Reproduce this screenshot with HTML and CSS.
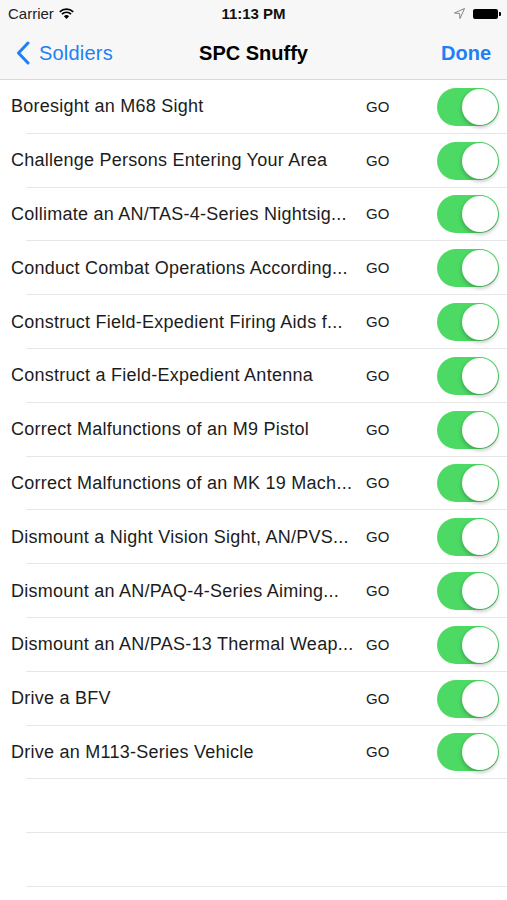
FILE: index.html
```html
<!DOCTYPE html>
<html lang="en">
<head>
    <meta charset="UTF-8">
    <meta name="viewport" content="width=device-width, initial-scale=1.0">
    <title>SPC Snuffy</title>
    <link rel="stylesheet" href="styles.css">
</head>
<body>
    <div class="top">
        <div class="status">
            <div class="carrier">
                Carrier
                <svg class="wifi" width="15" height="11" viewBox="0 0 15 11">
                    <path d="M7.5 11 L4.9 8.2 A3.8 3.8 0 0 1 10.1 8.2 Z" fill="#000"/>
                    <path d="M2.9 6.1 A6.6 6.6 0 0 1 12.1 6.1" stroke="#000" stroke-width="1.7" fill="none"/>
                    <path d="M0.8 3.8 A9.6 9.6 0 0 1 14.2 3.8" stroke="#000" stroke-width="1.7" fill="none"/>
                </svg>
            </div>
            <div class="time">11:13 PM</div>
            <div class="status-right">
                <svg class="arrow" width="11" height="11" viewBox="0 0 11 11">
                    <path d="M10.5 0.5 L0.5 5 L5.5 5.5 L6 10.5 Z" fill="none" stroke="#777" stroke-width="0.9" stroke-linejoin="round"/>
                </svg>
                <div class="battery"><span></span></div>
            </div>
        </div>
        <div class="navbar">
            <a class="back">
                <svg width="14" height="24" viewBox="0 0 14 24">
                    <path d="M12 2 L2.5 12 L12 22" stroke="#1d80f5" stroke-width="3" fill="none" stroke-linecap="round" stroke-linejoin="round"/>
                </svg>
                Soldiers
            </a>
            <div class="title">SPC Snuffy</div>
            <a class="done">Done</a>
        </div>
    </div>

    <ul class="tasks">
        <li><span class="name">Boresight an M68 Sight</span><span class="go">GO</span><span class="toggle"></span></li>
        <li><span class="name">Challenge Persons Entering Your Area</span><span class="go">GO</span><span class="toggle"></span></li>
        <li><span class="name">Collimate an AN/TAS-4-Series Nightsig...</span><span class="go">GO</span><span class="toggle"></span></li>
        <li><span class="name">Conduct Combat Operations According...</span><span class="go">GO</span><span class="toggle"></span></li>
        <li><span class="name">Construct Field-Expedient Firing Aids f...</span><span class="go">GO</span><span class="toggle"></span></li>
        <li><span class="name">Construct a Field-Expedient Antenna</span><span class="go">GO</span><span class="toggle"></span></li>
        <li><span class="name">Correct Malfunctions of an M9 Pistol</span><span class="go">GO</span><span class="toggle"></span></li>
        <li><span class="name">Correct Malfunctions of an MK 19 Mach...</span><span class="go">GO</span><span class="toggle"></span></li>
        <li><span class="name">Dismount a Night Vision Sight, AN/PVS...</span><span class="go">GO</span><span class="toggle"></span></li>
        <li><span class="name">Dismount an AN/PAQ-4-Series Aiming...</span><span class="go">GO</span><span class="toggle"></span></li>
        <li><span class="name">Dismount an AN/PAS-13 Thermal Weap...</span><span class="go">GO</span><span class="toggle"></span></li>
        <li><span class="name">Drive a BFV</span><span class="go">GO</span><span class="toggle"></span></li>
        <li><span class="name">Drive an M113-Series Vehicle</span><span class="go">GO</span><span class="toggle"></span></li>
        <li class="empty"></li>
        <li class="empty"></li>
    </ul>
</body>
</html>
```

FILE: styles.css
```css
body {
    margin: 0;
    font-family: "Liberation Sans", Arial, sans-serif;
    background: #fff;
    color: #111;
}

.top {
    background: #f7f7f7;
    border-bottom: 1px solid #d9d9d9;
}

.status {
    height: 27px;
    display: flex;
    align-items: center;
    justify-content: space-between;
    padding: 0 9px 0 8px;
    font-size: 15px;
    position: relative;
}

.carrier {
    display: flex;
    align-items: center;
    gap: 5px;
    color: #222;
}

.time {
    position: absolute;
    left: 0;
    right: 0;
    text-align: center;
    font-weight: bold;
    pointer-events: none;
}

.status-right {
    display: flex;
    align-items: center;
    gap: 8px;
}

.battery {
    width: 25px;
    height: 10px;
    background: #000;
    border-radius: 2px;
    position: relative;
}

.battery span {
    position: absolute;
    right: -3px;
    top: 3px;
    width: 2px;
    height: 4px;
    background: #000;
    border-radius: 0 1px 1px 0;
}

.navbar {
    height: 52px;
    display: flex;
    align-items: center;
    justify-content: space-between;
    padding: 0 16px 0 16px;
    position: relative;
}

.back, .done {
    color: #1d80f5;
    font-size: 20px;
    display: flex;
    align-items: center;
    gap: 9px;
}

.back {
    letter-spacing: 0.2px;
}

.done {
    font-weight: bold;
}

.title {
    position: absolute;
    left: 0;
    right: 0;
    text-align: center;
    font-size: 20px;
    font-weight: bold;
    color: #000;
    pointer-events: none;
}

.tasks {
    list-style: none;
    margin: 0;
    padding: 0;
}

.tasks li {
    height: 53.8px;
    box-sizing: border-box;
    display: flex;
    align-items: center;
    padding: 0 8px 0 11px;
    position: relative;
}

.tasks li::after {
    content: "";
    position: absolute;
    left: 26px;
    right: 0;
    bottom: 0;
    height: 1px;
    background: #e6e6e6;
}

.name {
    flex: 1;
    font-size: 18px;
    letter-spacing: 0.25px;
    white-space: nowrap;
    overflow: hidden;
    text-overflow: ellipsis;
    color: #1c1c1c;
}

.go {
    width: 71px;
    font-size: 15px;
    color: #1c1c1c;
    padding-left: 6px;
    margin-top: -1px;
}

.toggle {
    width: 62px;
    height: 38px;
    border-radius: 19px;
    background: #4cd964;
    position: relative;
}

.toggle::after {
    content: "";
    position: absolute;
    right: 1px;
    top: 1px;
    width: 36px;
    height: 36px;
    border-radius: 50%;
    background: #fff;
    box-shadow: 0 2px 4px rgba(0, 0, 0, 0.28);
}
```
